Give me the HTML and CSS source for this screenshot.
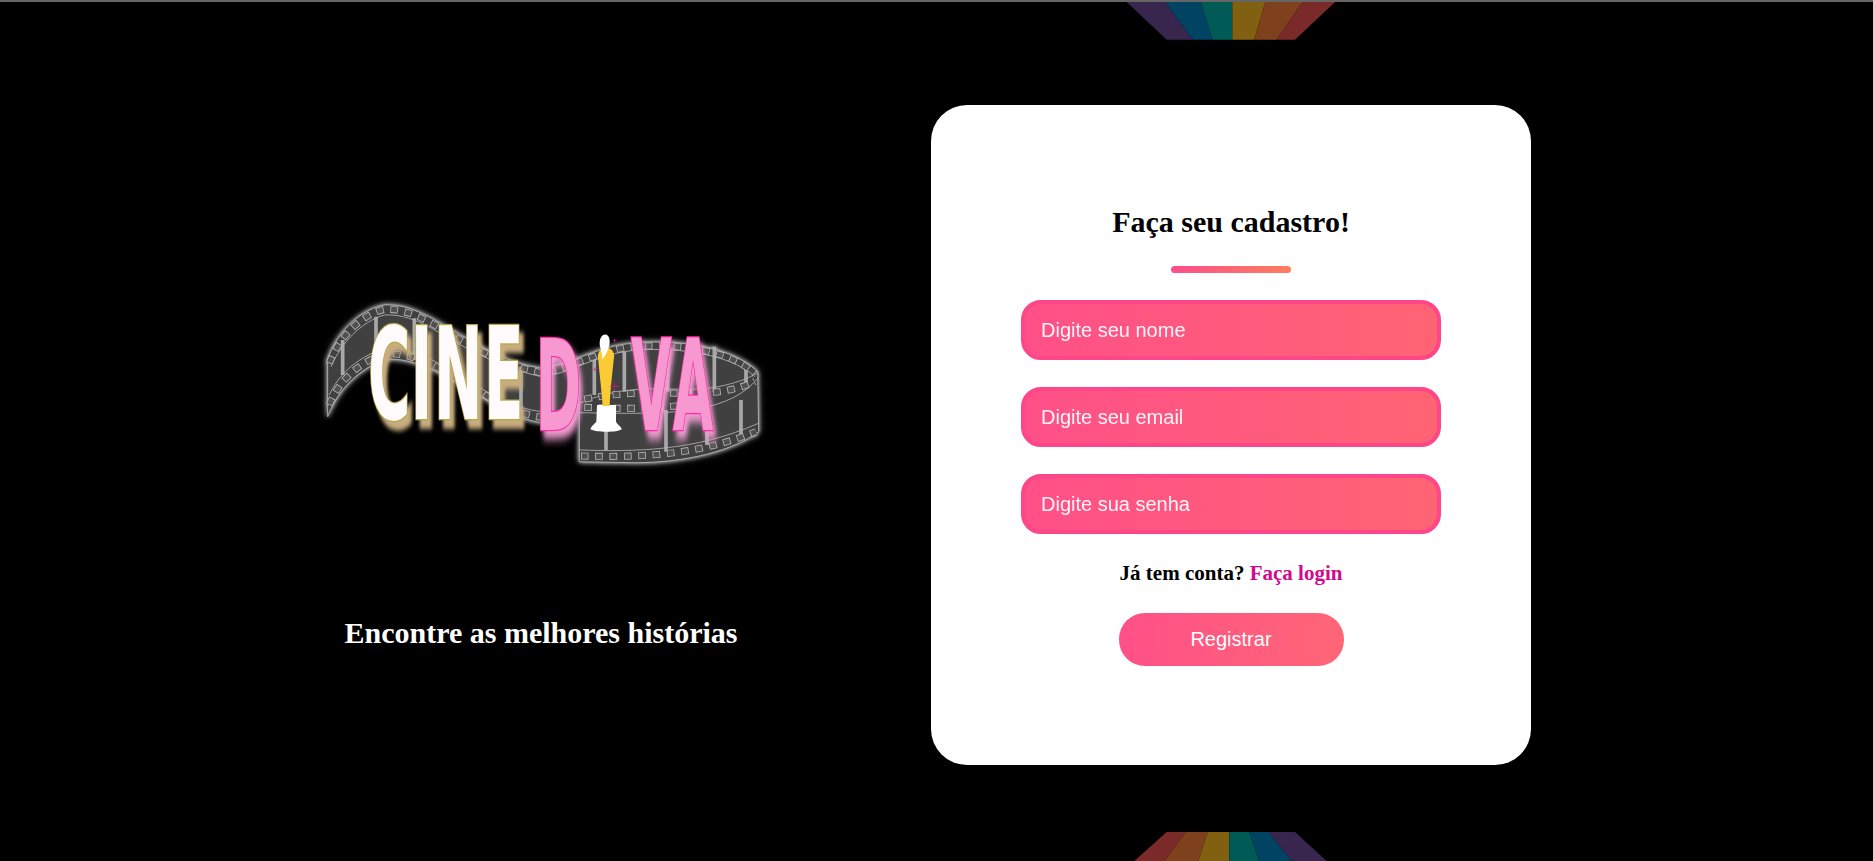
FILE: index.html
```html
<!DOCTYPE html>
<html lang="pt-BR">
<head>
<meta charset="utf-8">
<title>CineDiva - Cadastro</title>
<link rel="stylesheet" href="styles.css">
</head>
<body>
<svg class="rainbow rainbow-top" viewBox="1110 2 240 50" width="240" height="50" aria-hidden="true">
  <polygon class="c-purple" points="1126.7,2 1165,2 1192.7,39.7 1166.7,39.7"/>
  <polygon class="c-blue" points="1165,2 1200.7,2 1212.7,39.7 1192.7,39.7"/>
  <polygon class="c-teal" points="1200.7,2 1232.3,2 1232.3,39.7 1212.7,39.7"/>
  <polygon class="c-yellow" points="1232.3,2 1265.3,2 1254.3,39.7 1232.3,39.7"/>
  <polygon class="c-orange" points="1265.3,2 1302.7,2 1276.7,39.7 1254.3,39.7"/>
  <polygon class="c-red" points="1302.7,2 1335,2 1295,39.7 1276.7,39.7"/>
</svg>
<svg class="rainbow rainbow-bottom" viewBox="1120 820 240 41" width="240" height="41" aria-hidden="true">
  <polygon class="c-red" points="1166.7,832 1185.7,832 1164.3,861 1134.3,861"/>
  <polygon class="c-orange" points="1185.7,832 1207.7,832 1198.3,861 1164.3,861"/>
  <polygon class="c-yellow" points="1207.7,832 1229.3,832 1229.3,861 1198.3,861"/>
  <polygon class="c-teal" points="1229.3,832 1249.3,832 1259.3,861 1229.3,861"/>
  <polygon class="c-blue" points="1249.3,832 1268.3,832 1291.7,861 1259.3,861"/>
  <polygon class="c-purple" points="1268.3,832 1295,832 1326.7,861 1291.7,861"/>
</svg>
<main class="page">
  <section class="brand">
    <svg class="logo" viewBox="0 0 1440 600" width="480" height="200" role="img" aria-label="CineDiva">
      <g class="film">
        <path class="film-fill" d="M80 240 C100 170 170 90 250 75 C330 70 400 120 470 160 C540 200 620 250 720 265 C800 260 880 200 990 190 C1100 178 1280 190 1370 275 L1373 455 C1300 510 1160 548 1000 548 L835 545 L835 370 L720 428 C640 415 580 375 510 330 C430 285 340 230 250 238 C170 270 110 330 80 410 Z"/>
        <path class="film-bar" d="M125 180V285M225 110V215M340 115V240M660 260V400M880 225V345M970 215V335M1100 200V335M1240 200V335M1335 265V320M915 390V510M1095 390V515M1218 380V495M1320 360V465"/>
        <path class="film-line" d="M80 240 C100 170 170 90 250 75 C330 70 400 120 470 160 C540 200 620 250 720 265 C800 260 880 200 990 190 C1100 178 1280 190 1370 275 L1373 455 C1300 510 1160 548 1000 548 L835 545 L835 370 M80 240 L80 410 C110 330 170 270 250 238 C340 230 430 285 510 330 C580 375 640 415 720 428 M90 260 C120 190 180 125 250 105 C330 100 400 150 470 190 C540 230 630 270 720 290 C800 285 880 225 990 212 C1100 200 1280 215 1362 290 M85 345 C110 290 160 235 250 205 C330 200 420 250 500 300 C570 345 640 385 720 395 M835 370 C950 320 1050 325 1150 328 C1240 330 1310 310 1370 280 M835 398 C950 400 1100 405 1200 385 C1270 370 1330 345 1370 295 M835 510 C1000 515 1180 515 1372 430"/>
        <path class="perf-out" d="M85 250 C110 180 175 105 250 88 C330 85 400 135 470 175 C540 215 625 260 720 278 C800 272 880 215 990 201 C1100 190 1280 202 1362 282 M85 375 C110 310 165 250 250 222 C335 215 425 268 505 315 C575 360 640 400 720 412 M850 358 C950 336 1050 338 1150 340 C1240 342 1310 330 1360 305 M850 382 C930 385 1050 390 1170 372 M840 528 C1000 532 1180 530 1365 455"/>
        <path class="perf-in" d="M85 250 C110 180 175 105 250 88 C330 85 400 135 470 175 C540 215 625 260 720 278 C800 272 880 215 990 201 C1100 190 1280 202 1362 282 M85 375 C110 310 165 250 250 222 C335 215 425 268 505 315 C575 360 640 400 720 412 M850 358 C950 336 1050 338 1150 340 C1240 342 1310 330 1360 305 M850 382 C930 385 1050 390 1170 372 M840 528 C1000 532 1180 530 1365 455"/>
      </g>
      <text class="word word-cine" transform="translate(201 416) scale(.5 1)" x="0 256 396 696">CINE</text>
      <text class="word word-diva" transform="translate(704 449) scale(.48 1)" x="0">D</text>
      <text class="word word-diva" transform="translate(990 449) scale(.46 1)" x="0 272">VA</text>
      <g class="statue">
        <path class="statue-base" d="M888 375 H945 V425 C950 435 962 440 962 448 C950 458 885 458 868 448 C870 438 880 432 886 425 Z"/>
        <path class="statue-body" d="M905 378 C902 330 895 280 892 240 C888 225 893 212 905 205 L925 205 C938 212 942 225 938 240 C934 280 928 330 926 378 Z"/>
        <path class="statue-hair" d="M896 190 C896 170 908 160 918 165 C928 172 928 190 922 205 C916 222 908 236 902 238 C908 222 896 208 896 190 Z"/>
        <path class="spark" d="M940 305V332M926 319H954M941 176V188M935 182H947M882 262V274M876 268H888"/>
      </g>
    </svg>
    <h1 class="tagline">Encontre as melhores histórias</h1>
  </section>
  <section class="card">
    <h2 class="card-title">Faça seu cadastro!</h2>
    <div class="divider"></div>
    <form class="form">
      <input class="field" type="text" placeholder="Digite seu nome">
      <input class="field" type="email" placeholder="Digite seu email">
      <input class="field" type="password" placeholder="Digite sua senha">
      <p class="login-note">Já tem conta? <a class="login-link" href="#">Faça login</a></p>
      <button class="submit" type="button">Registrar</button>
    </form>
  </section>
</main>
</body>
</html>
```
FILE: styles.css
```css
* { box-sizing: border-box; }
html, body { margin: 0; height: 100%; }
body {
  background: #000;
  border-top: 2px solid #666;
  height: 861px;
  overflow: hidden;
  position: relative;
  font-family: "Liberation Serif", serif;
}
.rainbow { position: absolute; display: block; }
.rainbow-top { left: 1110px; top: 0; }
.rainbow-bottom { left: 1120px; top: 818px; }
.c-purple { fill: #38264f; }
.c-blue { fill: #004363; }
.c-teal { fill: #005a55; }
.c-yellow { fill: #826012; }
.c-orange { fill: #7e401d; }
.c-red { fill: #7a2b29; }

.page {
  display: flex;
  padding: 103px 0 0 151px;
}
.brand {
  width: 780px;
  flex: none;
  display: flex;
  flex-direction: column;
  align-items: center;
  padding-top: 175px;
}
.logo { display: block; overflow: visible; }
.tagline {
  margin: 136px 0 0;
  color: #fff;
  font-size: 30px;
  font-weight: 700;
}

.film { filter: drop-shadow(0 0 7px rgba(255,255,255,.8)) drop-shadow(0 0 10px rgba(255,255,255,.35)); }
.film-fill { fill: #404040; }
.film-line { fill: none; stroke: #b4b4b4; stroke-width: 2.5; }
.film-bar { fill: none; stroke: #a8a8a8; stroke-width: 11; }
.perf-out { fill: none; stroke: #b4b4b4; stroke-width: 21; stroke-dasharray: 23 20; }
.perf-in { fill: none; stroke: #505050; stroke-width: 16; stroke-dasharray: 18 25; stroke-dashoffset: -2.5; }

.word {
  font-family: "DejaVu Sans", sans-serif;
  font-stretch: condensed;
  font-weight: 700;
  paint-order: stroke;
}
.word-cine {
  font-size: 386px;
  fill: #fffafc;
  stroke: #b5a843;
  stroke-width: 8;
  filter: drop-shadow(26px 26px 8px #c8ad80);
}
.word-diva {
  font-size: 380px;
  fill: #f898d0;
  stroke: #ff2ca6;
  stroke-width: 8;
  filter: drop-shadow(20px 24px 14px #f2a0d4);
}
.statue-base, .statue-hair { fill: #fff; }
.statue-body { fill: #fbcb36; }
.spark { fill: none; stroke: #e5188f; stroke-width: 2; }

.card {
  width: 600px;
  height: 660px;
  flex: none;
  background: #fff;
  border-radius: 36px;
  display: flex;
  flex-direction: column;
  align-items: center;
  padding-top: 98px;
}
.card-title {
  margin: 0;
  font-size: 30px;
  line-height: 38px;
  font-weight: 700;
  color: #000;
}
.divider {
  width: 120px;
  height: 7px;
  margin-top: 25px;
  border-radius: 4px;
  background: linear-gradient(90deg, #ff4f8b, #ff7e5f);
}
.form {
  display: flex;
  flex-direction: column;
  align-items: center;
  margin-top: 27px;
}
.field {
  width: 420px;
  height: 60px;
  margin-bottom: 27px;
  padding: 0 16px;
  border: 4px solid #ff4688;
  border-radius: 20px;
  background: linear-gradient(90deg, #ff5088, #ff6473);
  color: #fff;
  font-family: "Liberation Sans", sans-serif;
  font-size: 20px;
  outline: none;
}
.field::placeholder { color: #fff; opacity: .95; }
.login-note {
  margin: 0;
  font-size: 21px;
  line-height: 24px;
  font-weight: 700;
  color: #000;
}
.login-link { color: #d1098c; text-decoration: none; }
.submit {
  width: 225px;
  height: 53px;
  margin-top: 28px;
  border: 0;
  border-radius: 26px;
  background: linear-gradient(90deg, #ff5088, #ff6676);
  color: #fff;
  font-family: "Liberation Sans", sans-serif;
  font-size: 20px;
}
```
